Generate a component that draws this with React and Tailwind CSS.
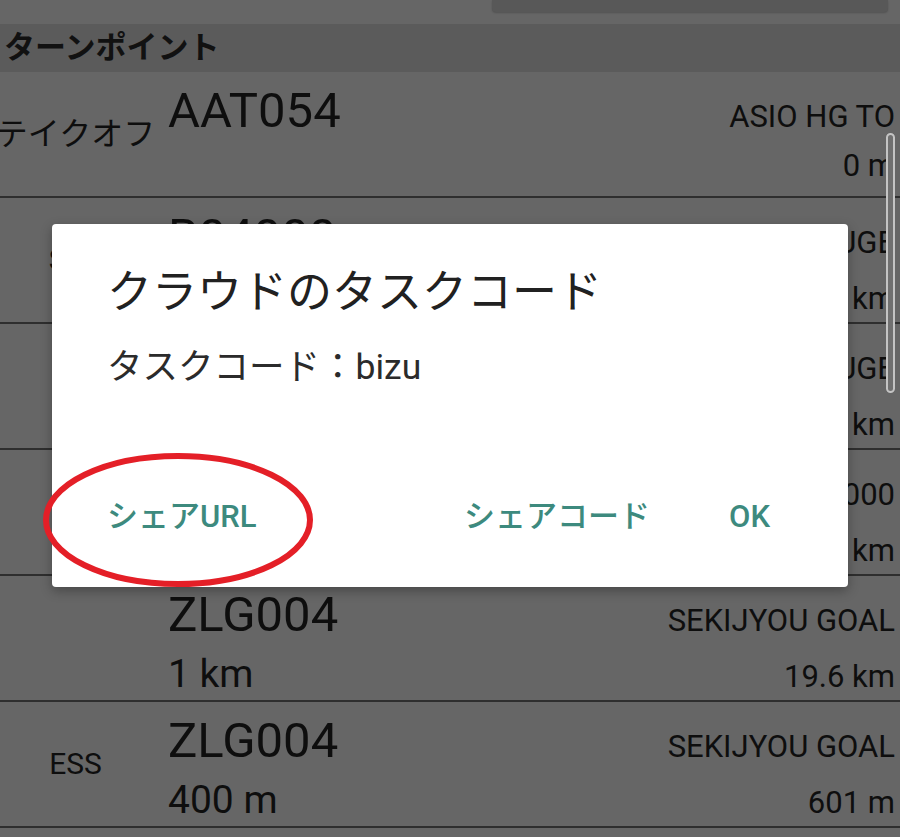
import React from 'react';

const font = "font-['Roboto','Noto_Sans_CJK_JP',sans-serif]";

const rows = [
  { label: 'テイクオフ', jp: true, code: 'AAT054', sub: '', name: 'ASIO HG TO', dist: '0 m' },
  { label: 'SSS', code: 'B04000', sub: '5 km', name: 'KOUSHI TOUGE', dist: '4.8 km' },
  { label: '', code: 'B03000', sub: '2 km', name: 'AKAGI TOUGE', dist: '11.2 km' },
  { label: '', code: 'D02000', sub: '1 km', name: 'B04000', dist: '15.0 km' },
  { label: '', code: 'ZLG004', sub: '1 km', name: 'SEKIJYOU GOAL', dist: '19.6 km' },
  { label: 'ESS', code: 'ZLG004', sub: '400 m', name: 'SEKIJYOU GOAL', dist: '601 m' },
];

const TurnpointRow = ({ row }) => (
  <div className="flex h-[126px] shrink-0 border-b-2 border-[#2e2e2e] text-[#0e0e0e]">
    <div
      className={`flex w-[151px] shrink-0 items-center justify-center whitespace-nowrap leading-[36px] ${
        row.jp ? 'text-[32px]' : 'text-[30px]'
      }`}
    >
      {row.label}
    </div>
    <div className="ml-[17px] flex flex-1 flex-col pr-[5px] pt-[11px]">
      <div className="flex h-[56px] items-baseline justify-between">
        <span className="text-[49px] leading-[56px]">{row.code}</span>
        <span className="text-[31px] leading-[36px]">{row.name}</span>
      </div>
      <div className="mt-[9px] flex h-[44px] items-baseline justify-between">
        <span className="text-[39px] leading-[44px]">{row.sub}</span>
        <span className="text-[31px] leading-[36px]">{row.dist}</span>
      </div>
    </div>
  </div>
);

const App = () => {
  return (
    <div className={`relative flex h-[837px] w-[900px] flex-col overflow-hidden bg-[#666666] ${font}`}>
      {/* top search card */}
      <div className="flex h-[24px] shrink-0 justify-end">
        <div className="mr-[12px] h-[12px] w-[396px] rounded-b-[4px] bg-[#585858] shadow-[0_1px_2px_rgba(0,0,0,0.2)]" />
      </div>

      {/* section header */}
      <div className="flex h-[48px] shrink-0 items-center bg-[#5b5b5b] pl-[4px]">
        <span className="text-[31px] font-bold leading-[36px] text-[#111111]">ターンポイント</span>
      </div>

      {rows.map((row, i) => (
        <TurnpointRow key={i} row={row} />
      ))}
      <div className="h-[126px] shrink-0" />

      {/* scrollbar */}
      <div className="absolute left-[886px] top-[133px] h-[260px] w-[9px] rounded-full border-2 border-[#c4c4c4] bg-[#707070]" />

      {/* dialog */}
      <div className="absolute left-[52px] top-[224px] flex h-[363px] w-[796px] flex-col rounded-[4px] bg-white pl-[55px] pt-[43px] shadow-[0_4px_12px_rgba(0,0,0,0.3)]">
        <div className="text-[45px] leading-[52px] text-[#212121]">クラウドのタスクコード</div>
        <div className="mt-[28px] text-[35.5px] leading-[40px] text-[#2b2b2b]">タスクコード：bizu</div>
        <div className="mt-auto flex items-center pb-[52px] pr-[78px] text-[31px] font-medium leading-[36px] text-[#3d8a7e]">
          <span>シェアURL</span>
          <span className="ml-auto">シェアコード</span>
          <span className="ml-[79px]">OK</span>
        </div>
      </div>

      {/* red annotation ellipse */}
      <svg className="absolute left-[40px] top-[449px]" width="278" height="142" viewBox="0 0 278 142">
        <ellipse cx="138" cy="71" rx="132" ry="64" fill="none" stroke="#e41f27" strokeWidth="6" />
      </svg>
    </div>
  );
};

export default App;
